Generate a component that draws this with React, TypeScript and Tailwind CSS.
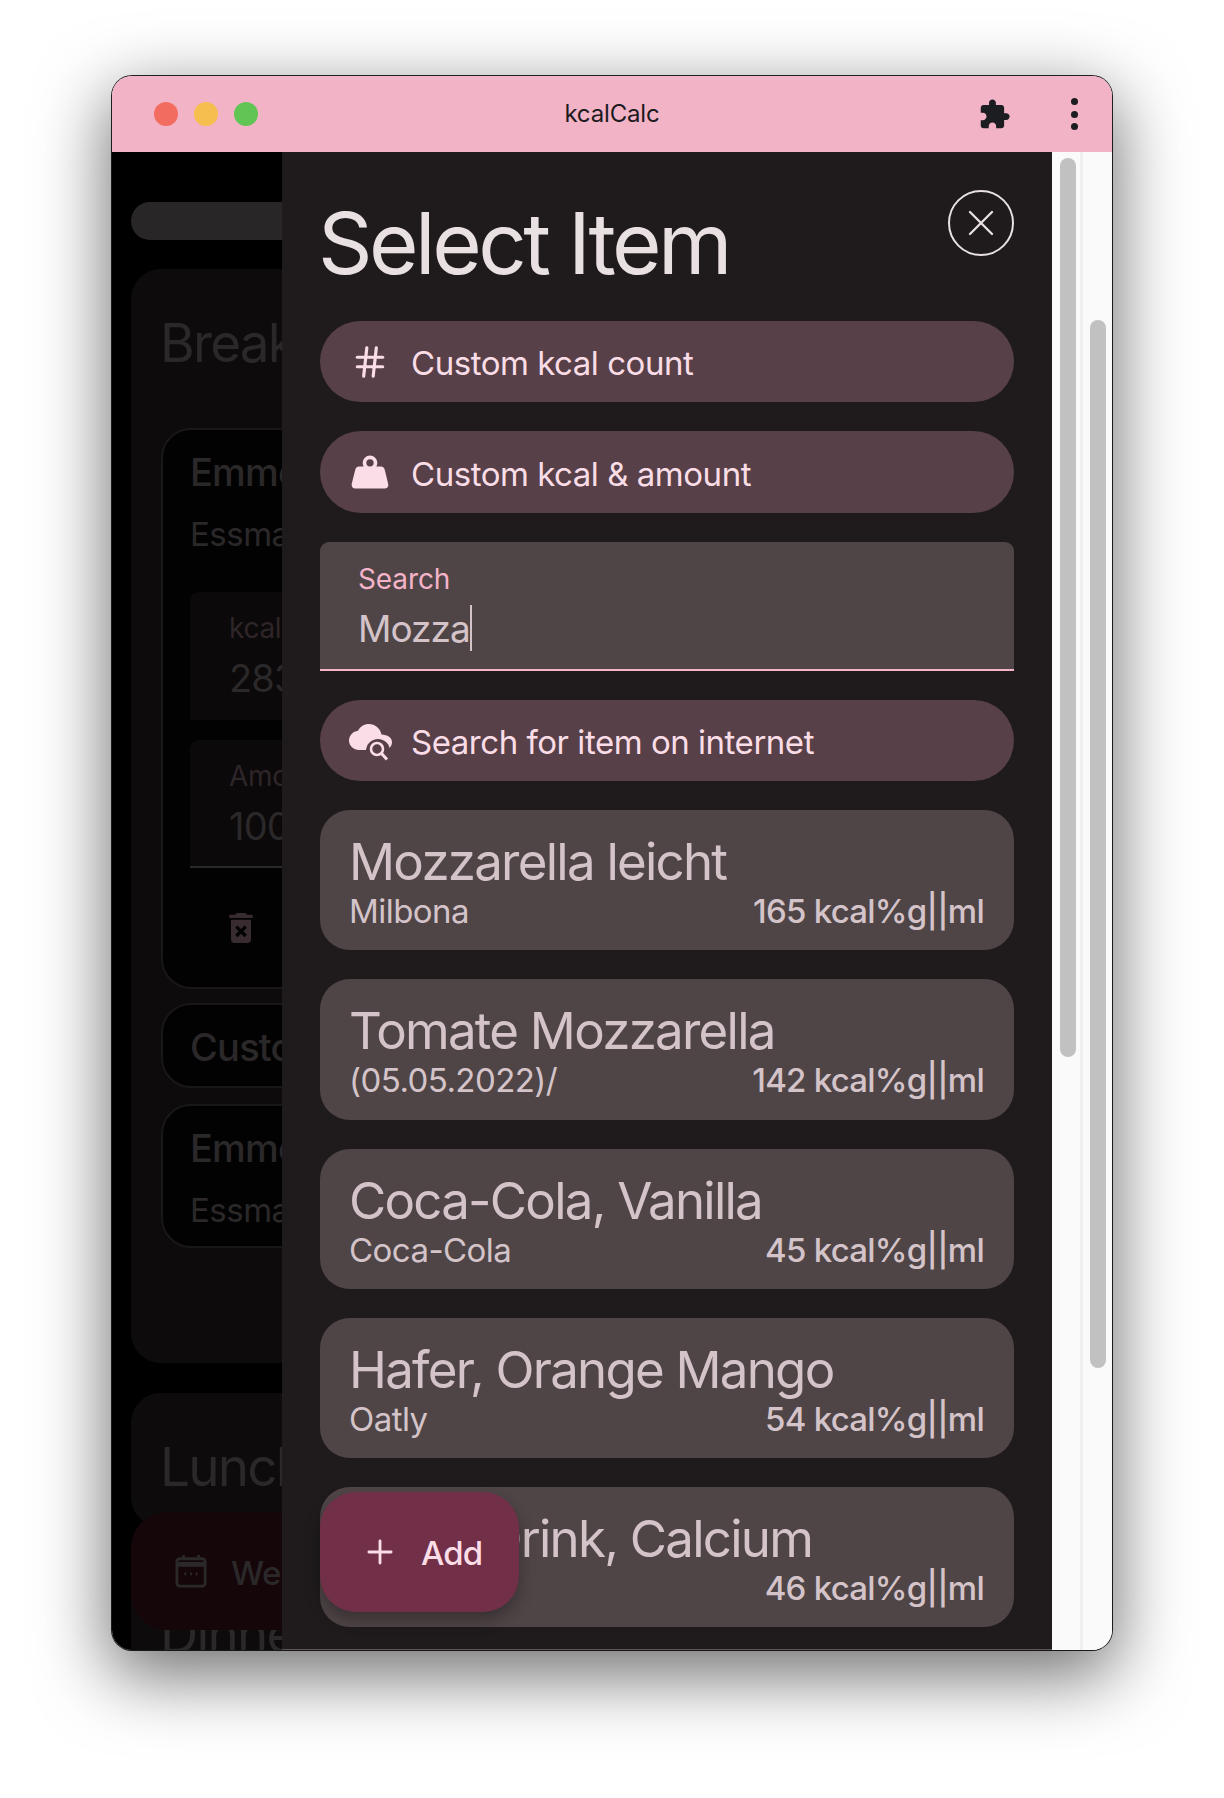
import { Hash, Plus, X } from "lucide-react";

const items = [
  { title: "Mozzarella leicht", sub: "Milbona", kcal: "165 kcal%g||ml", h: "h-[140px]" },
  { title: "Tomate Mozzarella", sub: "(05.05.2022)/", kcal: "142 kcal%g||ml", h: "h-[141px]" },
  { title: "Coca-Cola, Vanilla", sub: "Coca-Cola", kcal: "45 kcal%g||ml", h: "h-[140px]" },
  { title: "Hafer, Orange Mango", sub: "Oatly", kcal: "54 kcal%g||ml", h: "h-[140px]" },
  { title: "Hafer Drink, Calcium", sub: "Alpro", kcal: "46 kcal%g||ml", h: "h-[140px]" },
];

function ActionButton({ icon, label }: { icon: React.ReactNode; label: string }) {
  return (
    <div className="flex h-[81.5px] shrink-0 items-center rounded-full bg-[#574048] pl-[27px] text-[33px] font-[440] leading-[40px] tracking-[-0.47px] text-[#fadde6]">
      <div className="flex w-[46px] justify-center">{icon}</div>
      <span className="ml-[18px] pt-[3px]">{label}</span>
    </div>
  );
}

function FoodCard({ title, sub, kcal, h }: { title: string; sub: string; kcal: string; h: string }) {
  return (
    <div className={`${h} shrink-0 rounded-[30px] bg-[#4f4547] pl-[29px] pr-[30px] pt-[22px] text-[#d4c4c9]`}>
      <div className="text-[51px] font-[430] leading-[60px] tracking-[-1.75px]">{title}</div>
      <div className="mt-[3px] flex items-baseline justify-between text-[33px] leading-[33px]">
        <span className="font-[440] tracking-[-0.55px]">{sub}</span>
        <span className="font-[540] tracking-[-0.75px]">{kcal}</span>
      </div>
    </div>
  );
}

function BackField({ label, value, underline }: { label: string; value: string; underline?: boolean }) {
  return (
    <div className={`h-[128px] rounded-t-[9px] bg-[#0b090a] pl-[39px] pt-[17px] ${underline ? "border-b-2 border-[#2b2829]" : ""}`}>
      <div className="text-[28px] leading-[38px] tracking-[-0.3px] text-[#2e2529]">{label}</div>
      <div className="mt-[7px] text-[38px] leading-[48px] tracking-[-0.8px] text-[#2b2829]">{value}</div>
    </div>
  );
}

function BackBackdrop() {
  return (
    <div className="h-full w-[170px] shrink-0 overflow-hidden bg-black pl-[19px] pt-[50px]">
      <div className="w-[800px]">
        <div className="h-[38px] rounded-full bg-[#292627]" />
        <div className="mt-[29px] h-[1094px] rounded-[30px] bg-[#0d0b0c] px-[30px] pt-[44px]">
          <div className="-ml-[1px] text-[53px] font-[430] leading-[60px] tracking-[-1.8px] text-[#2b2829]">Breakfast</div>
          <div className="mt-[55px] h-[561px] rounded-[30px] border-2 border-[#191718] bg-[#030203] px-[27px] pt-[20px]">
            <div className="text-[38px] font-medium leading-[44px] tracking-[-0.8px] text-[#2b2829]">Emmentaler</div>
            <div className="mt-[20px] text-[33px] leading-[40px] tracking-[-0.5px] text-[#2b2829]">Essmann</div>
            <div className="mt-[38px] flex flex-col gap-[20px]">
              <BackField label="kcal" value="283" />
              <BackField label="Amount" value="100" underline />
            </div>
            <svg viewBox="0 0 24 24" className="ml-[31px] mt-[40px] h-[40px] w-[40px] text-[#382c31]" fill="currentColor">
              <path d="M6 19c0 1.1.9 2 2 2h8c1.100 0 2-.9 2-2V7H6v12zm2.460-7.120l1.410-1.410L12 12.590l2.120-2.120 1.410 1.410L13.410 14l2.120 2.120-1.410 1.410L12 15.410l-2.120 2.120-1.410-1.410L10.590 14l-2.130-2.120zM15.500 4l-1-1h-5l-1 1H5v2h14V4z" />
            </svg>
          </div>
          <div className="mt-[14px] h-[85px] rounded-[30px] border-2 border-[#191718] bg-[#030203] px-[27px] pt-[20px]">
            <div className="text-[38px] font-medium leading-[44px] tracking-[-0.8px] text-[#2b2829]">Custom</div>
          </div>
          <div className="mt-[16px] h-[144px] rounded-[30px] border-2 border-[#191718] bg-[#030203] px-[27px] pt-[20px]">
            <div className="text-[38px] font-medium leading-[44px] tracking-[-0.8px] text-[#2b2829]">Emmentaler</div>
            <div className="mt-[20px] text-[33px] leading-[40px] tracking-[-0.5px] text-[#2b2829]">Essmann</div>
          </div>
        </div>
        <div className="mt-[30px] h-[134px] rounded-[30px] bg-[#0d0b0c] px-[30px] pt-[44px]">
          <div className="-ml-[1px] text-[53px] font-[430] leading-[60px] tracking-[-1.8px] text-[#2b2829]">Lunch</div>
        </div>
        <div className="mt-[30px] rounded-t-[30px] bg-[#0d0b0c] px-[30px] pt-[47px]">
          <div className="-ml-[1px] text-[53px] font-[430] leading-[60px] tracking-[-1.8px] text-[#2b2829]">Dinner</div>
        </div>
      </div>
    </div>
  );
}

export default function App() {
  return (
    <div className="h-[1798px] overflow-hidden bg-white pl-[112px] pt-[76px] font-['Inter',sans-serif]">
      <div className="relative flex h-[1574px] w-[1000px] flex-col overflow-hidden rounded-[20px] shadow-[0_0_0_1px_rgba(0,0,0,0.85),0_22px_70px_4px_rgba(0,0,0,0.56)]">
        <div className="grid h-[76px] shrink-0 grid-cols-[1fr_auto_1fr] items-center bg-[#f2b3c7]">
          <div className="flex gap-[16px] pl-[42px]">
            <div className="h-[24px] w-[24px] rounded-full bg-[#f26d60]" />
            <div className="h-[24px] w-[24px] rounded-full bg-[#f5be4f]" />
            <div className="h-[24px] w-[24px] rounded-full bg-[#60c554]" />
          </div>
          <div className="text-[24px] leading-[30px] tracking-[-0.15px] text-[#1d1b20]">kcalCalc</div>
          <div className="flex items-center justify-end pr-[34px]">
            <svg viewBox="0 0 24 24" className="h-[33px] w-[33px] text-[#1b1d21]" fill="currentColor">
              <path d="M20.500 11H19V7c0-1.100-.9-2-2-2h-4V3.500C13 2.120 11.880 1 10.500 1S8 2.120 8 3.500V5H4c-1.100 0-1.990.9-1.990 2v3.800H3.500c1.490 0 2.700 1.210 2.700 2.700s-1.210 2.700-2.700 2.700H2V20c0 1.100.9 2 2 2h3.800v-1.500c0-1.490 1.210-2.700 2.700-2.700 1.490 0 2.700 1.210 2.700 2.700V22H17c1.100 0 2-.9 2-2v-4h1.500c1.380 0 2.500-1.120 2.500-2.500S21.880 11 20.500 11z" />
            </svg>
            <div className="ml-[60px] flex flex-col gap-[5.500px]">
              <div className="h-[7px] w-[7px] rounded-full bg-[#1b1d21]" />
              <div className="h-[7px] w-[7px] rounded-full bg-[#1b1d21]" />
              <div className="h-[7px] w-[7px] rounded-full bg-[#1b1d21]" />
            </div>
          </div>
        </div>

        <div className="relative flex min-h-0 flex-1">
          <BackBackdrop />

          <div className="flex h-full w-[770px] shrink-0 flex-col gap-[28.900px] overflow-hidden border-b border-[#5c5557] bg-[#1f1b1c] px-[38px] pt-[38px]">
            <div className="flex h-[102px] shrink-0 items-start justify-between">
              <div className="-ml-[2px] mt-[6px] text-[85px] font-[430] leading-[96px] tracking-[-3.5px] text-[#e9e0e2]">Select Item</div>
              <div className="flex h-[66px] w-[66px] items-center justify-center rounded-full border-2 border-[#e9e0e2] text-[#e9e0e2]">
                <X size={44} strokeWidth={1.3} />
              </div>
            </div>
            <ActionButton icon={<Hash size={38} strokeWidth={2} />} label="Custom kcal count" />
            <ActionButton
              icon={
                <svg viewBox="0 0 24 24" className="h-[44px] w-[44px]" fill="currentColor">
                  <path d="M12,3A4,4 0 0,1 16,7C16,7.730 15.810,8.410 15.460,9H18C18.950,9 19.750,9.670 19.950,10.560C21.960,18.570 22,18.780 22,19A2,2 0 0,1 20,21H4A2,2 0 0,1 2,19C2,18.780 2.040,18.570 4.050,10.560C4.250,9.670 5.050,9 6,9H8.540C8.190,8.410 8,7.730 8,7A4,4 0 0,1 12,3M12,5A2,2 0 0,0 10,7A2,2 0 0,0 12,9A2,2 0 0,0 14,7A2,2 0 0,0 12,5Z" />
                </svg>
              }
              label="Custom kcal & amount"
            />
            <div className="h-[129px] shrink-0 rounded-t-[9px] border-b-2 border-[#f4b3c9] bg-[#4f4547] pl-[38px] pt-[18px]">
              <div className="text-[28px] font-[440] leading-[38px] tracking-[-0.1px] text-[#f4b3c9]">Search</div>
              <div className="mt-[7px] flex text-[37px] font-[430] leading-[48px] tracking-[-1px] text-[#d4c4c9]">
                <span>Mozza</span>
                <span className="h-[46px] w-[2px] bg-[#d4c4c9]" />
              </div>
            </div>
            <ActionButton
              icon={
                <svg viewBox="0 0 44 44" className="h-[44px] w-[44px] text-[#fadde6]">
                  <path fill="currentColor" d="M33.500 16.500C32.300 10.400 27 6 21 6 16.200 6 12.100 8.700 10 12.700 5 13.300 1 17.500 1 22.600 1 28 5.500 32 11 32H36c4.500 0 8-3.500 8-8 0-4.300-4.300-7.200-10.500-7.500z" />
                  <circle cx="30" cy="33" r="12" fill="#574048" />
                  <circle cx="29" cy="31" r="6" fill="none" stroke="currentColor" strokeWidth="2.600" />
                  <path d="M33.500 35.500 39 41.500" stroke="currentColor" strokeWidth="3" fill="none" />
                </svg>
              }
              label="Search for item on internet"
            />
            {items.map((it) => (
              <FoodCard key={it.title} {...it} />
            ))}
          </div>

          <div className="flex h-full w-[60px] shrink-0 bg-[#fafafa] pl-[8px]">
            <div className="mt-[6px] h-[899px] w-[16px] rounded-full bg-[#c1c1c1]" />
            <div className="ml-[4px] h-full w-[3px] bg-[#f0f0f0]" />
            <div className="ml-[7px] mt-[168px] h-[1048px] w-[16px] rounded-full bg-[#c1c1c1]" />
          </div>

          <div className="absolute left-[19px] top-[1360px] flex h-[118px] w-[151px] items-center overflow-hidden rounded-l-[36px] bg-[#150609] pl-[44px] text-[#2b2829]">
            <svg viewBox="0 0 34 36" className="h-[36px] w-[32px] shrink-0" fill="none" stroke="currentColor" strokeWidth="3">
              <rect x="2" y="5" width="30" height="29" rx="3" />
              <path d="M2 11H32" strokeWidth="5" />
              <path d="M9 1V6M25 1V6" />
              <path d="M10 21H12M16 21H18M22 21H24" />
            </svg>
            <span className="ml-[24px] pt-[3px] text-[33px] font-medium leading-[40px] tracking-[-0.5px]">Week</span>
          </div>

          <div className="absolute left-[208px] top-[1340px] flex h-[120px] w-[199px] items-center rounded-[36px] bg-[#722f48] pl-[41px] text-[#fadde6] shadow-[0_8px_16px_rgba(0,0,0,0.3)]">
            <Plus size={38} strokeWidth={1.8} />
            <span className="ml-[22px] pt-[2px] text-[33px] font-medium leading-[40px] tracking-[-0.9px]">Add</span>
          </div>
        </div>
      </div>
    </div>
  );
}
